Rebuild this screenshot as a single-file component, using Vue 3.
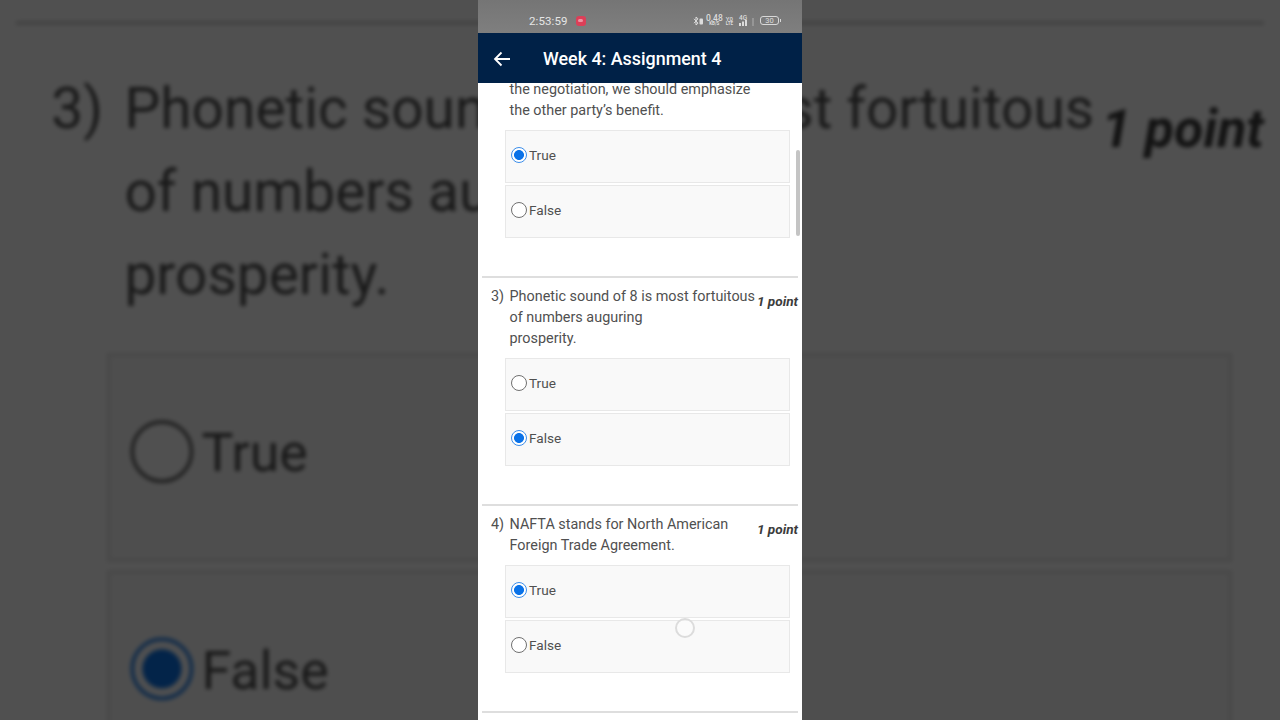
<script setup>
const questions = [
  {
    id: 2,
    text: 'the negotiation, we should emphasize\nthe other party’s benefit.',
    answer: 'True',
  },
  {
    id: 3,
    num: '3)',
    points: '1 point',
    text: 'Phonetic sound of 8 is most fortuitous\nof numbers auguring\nprosperity.',
    answer: 'False',
  },
  {
    id: 4,
    num: '4)',
    points: '1 point',
    text: 'NAFTA stands for North American\nForeign Trade Agreement.',
    answer: 'True',
  },
]
const choices = ['True', 'False']
const zoomed = questions[1]
</script>

<template>
  <div class="screen">
    <!-- blurred, zoomed copy of the video behind the phone frame -->
    <div class="backdrop" aria-hidden="true">
      <div class="backdrop-inner">
        <div class="question">
          <div class="q-row">
            <span class="q-num">{{ zoomed.num }}</span>
            <span class="q-text">{{ zoomed.text }}</span>
            <span class="q-points">{{ zoomed.points }}</span>
          </div>
          <div class="options">
            <div v-for="c in choices" :key="c" class="option">
              <span :class="['radio', { checked: zoomed.answer === c }]"></span>
              <span class="label">{{ c }}</span>
            </div>
          </div>
        </div>
      </div>
      <div class="dim"></div>
    </div>

    <div class="phone">
      <div class="status-bar">
        <span class="clock">2:53:59</span>
        <span class="rec"><span class="rec-dot"></span></span>
        <div class="status-right">
          <svg class="bt" width="11" height="10" viewBox="0 0 11 10">
            <path d="M1 2.8l4 4.4L3 9V1l2 1.8-4 4.4" fill="none" stroke="#dcdcdc" stroke-width="1" />
            <rect x="6.5" y="2.5" width="3.5" height="6" rx="1" fill="#dcdcdc" />
          </svg>
          <span class="speed"><b>0.48</b><i>KB/S</i></span>
          <span class="volte"><b>Y0</b><i>LTE</i></span>
          <span class="net">
            <span class="net-label">4G</span>
            <svg width="12" height="6" viewBox="0 0 12 6">
              <rect x="0" y="3" width="2" height="3" fill="#dcdcdc" />
              <rect x="3" y="1.5" width="2" height="4.5" fill="#dcdcdc" />
              <rect x="6" y="0" width="2" height="6" fill="#dcdcdc" />
            </svg>
            <span class="bars-off"></span>
          </span>
          <span class="battery">30</span>
        </div>
      </div>

      <div class="app-bar">
        <svg class="back" width="18" height="16" viewBox="0 0 18 16">
          <path d="M17 8H2M8.5 1.5L2 8l6.5 6.5" fill="none" stroke="#fff" stroke-width="1.8" />
        </svg>
        <span class="title">Week 4: Assignment 4</span>
      </div>

      <div class="scroll">
        <div class="scroll-content">
          <div v-for="q in questions" :key="q.id" class="question">
            <div class="q-row">
              <span class="q-num">{{ q.num }}</span>
              <span class="q-text">{{ q.text }}</span>
              <span v-if="q.points" class="q-points">{{ q.points }}</span>
            </div>
            <div class="options">
              <div v-for="c in choices" :key="c" class="option">
                <span :class="['radio', { checked: q.answer === c }]"></span>
                <span class="label">{{ c }}</span>
              </div>
            </div>
          </div>
        </div>
        <div class="scrollbar"></div>
        <div class="touch"></div>
      </div>
    </div>
  </div>
</template>

<style>
html,
body {
  margin: 0;
  overflow: hidden;
  background: #4c4c4c;
}
</style>

<style scoped>
.screen {
  position: relative;
  width: 1280px;
  height: 720px;
  overflow: hidden;
  display: flex;
  justify-content: center;
  font-family: Roboto, "Liberation Sans", sans-serif;
}

.backdrop {
  position: absolute;
  inset: 0;
  overflow: hidden;
  background: #fff;
}

.backdrop-inner {
  position: absolute;
  left: 0;
  top: 21px;
  width: 324px;
  transform: scale(3.95);
  transform-origin: 0 0;
  filter: blur(0.6px);
}

.backdrop-inner .question {
  padding-top: 10.6px;
  border-top: 1.2px solid #d4d4d4;
  border-bottom: none;
}

.dim {
  position: absolute;
  inset: 0;
  background: rgba(0, 0, 0, 0.685);
}

.phone {
  position: relative;
  width: 324px;
  height: 720px;
  display: flex;
  flex-direction: column;
  background: #fff;
}

.status-bar {
  height: 33px;
  flex: none;
  display: flex;
  align-items: center;
  padding: 8px 23px 0 51px;
  box-sizing: border-box;
  background: linear-gradient(#757575, #7f7f7f);
  color: #e6e6e6;
}

.clock {
  font-size: 11.5px;
  letter-spacing: 0.1px;
}

.rec {
  margin-left: 8px;
  width: 10px;
  height: 10px;
  border-radius: 3px;
  background: #dc3f58;
  display: flex;
  align-items: center;
  justify-content: center;
}

.rec-dot {
  width: 5px;
  height: 3px;
  border-radius: 2px;
  background: #ee93a3;
}

.status-right {
  margin-left: auto;
  display: flex;
  align-items: center;
  color: #dcdcdc;
}

.bt {
  margin-right: 2px;
}

.speed,
.volte {
  display: flex;
  flex-direction: column;
  align-items: center;
}

.speed b,
.volte b {
  font-size: 8.5px;
  line-height: 7px;
  font-weight: 500;
}

.speed i,
.volte i {
  font-size: 4.5px;
  line-height: 4px;
  font-style: normal;
  font-weight: 700;
}

.volte {
  margin-left: 3px;
}

.volte b {
  font-size: 6px;
}

.net {
  position: relative;
  margin-left: 4px;
  width: 17px;
  height: 10px;
  display: flex;
  align-items: flex-end;
  justify-content: flex-end;
}

.net svg {
  margin-right: 1px;
}

.net-label {
  position: absolute;
  left: 2px;
  top: -2px;
  font-size: 6.5px;
  font-weight: 500;
}

.bars-off {
  width: 2px;
  height: 8px;
  background: #969696;
}

.battery {
  position: relative;
  margin-left: 6px;
  width: 19px;
  height: 9px;
  box-sizing: border-box;
  border: 1px solid #d8d8d8;
  border-radius: 3px;
  font-size: 7.5px;
  line-height: 7px;
  text-align: center;
}

.battery::after {
  content: "";
  position: absolute;
  right: -3px;
  top: 1.5px;
  width: 1.5px;
  height: 3px;
  background: #d8d8d8;
}

.app-bar {
  height: 50px;
  flex: none;
  display: flex;
  align-items: center;
  padding: 1px 0 0 15px;
  box-sizing: border-box;
  background: #002147;
  color: #fff;
  position: relative;
  z-index: 1;
}

.title {
  margin-left: 32px;
  font-size: 17.9px;
  font-weight: 500;
}

.scroll {
  position: relative;
  flex: 1;
  overflow: hidden;
}

.scroll-content {
  margin-top: -4px;
}

.question {
  margin: 0 4px;
  padding: 0 0 38px 9px;
  border-bottom: 2px solid #dedede;
}

.question + .question {
  padding-top: 8px;
}

.q-row {
  display: flex;
  font-size: 14.4px;
  line-height: 21px;
  color: #505050;
}

.q-num {
  flex: none;
  width: 18.5px;
}

.q-text {
  flex: 1;
  white-space: pre-line;
}

.q-points {
  flex: none;
  margin-top: 5px;
  font-size: 13.6px;
  font-weight: 700;
  font-style: italic;
  color: #3c3c3c;
}

.options {
  margin: 9px 8px 0 14px;
  display: flex;
  flex-direction: column;
  gap: 2px;
}

.option {
  height: 53px;
  box-sizing: border-box;
  padding: 16px 0 0 4.5px;
  display: flex;
  align-items: flex-start;
  background: #f9f9f9;
  border: 1px solid #e8e8e8;
}

.radio {
  width: 16px;
  height: 16px;
  flex: none;
  box-sizing: border-box;
  border: 1px solid #707070;
  border-radius: 50%;
  background: #fff;
}

.radio.checked {
  border-color: #3b8dea;
  background: radial-gradient(circle, #0a72e8 0 4.6px, #fff 5.3px);
}

.label {
  margin-left: 2.5px;
  font-size: 13.6px;
  line-height: 16px;
  color: #505050;
}

.scrollbar {
  position: absolute;
  left: 318px;
  top: 67px;
  width: 4px;
  height: 86px;
  border-radius: 2px;
  background: #c4c4c4;
}

.touch {
  position: absolute;
  left: 197px;
  top: 535px;
  width: 20px;
  height: 20px;
  box-sizing: border-box;
  border: 2px solid #dcdcdc;
  border-radius: 50%;
  background: rgba(255, 255, 255, 0.35);
}
</style>
